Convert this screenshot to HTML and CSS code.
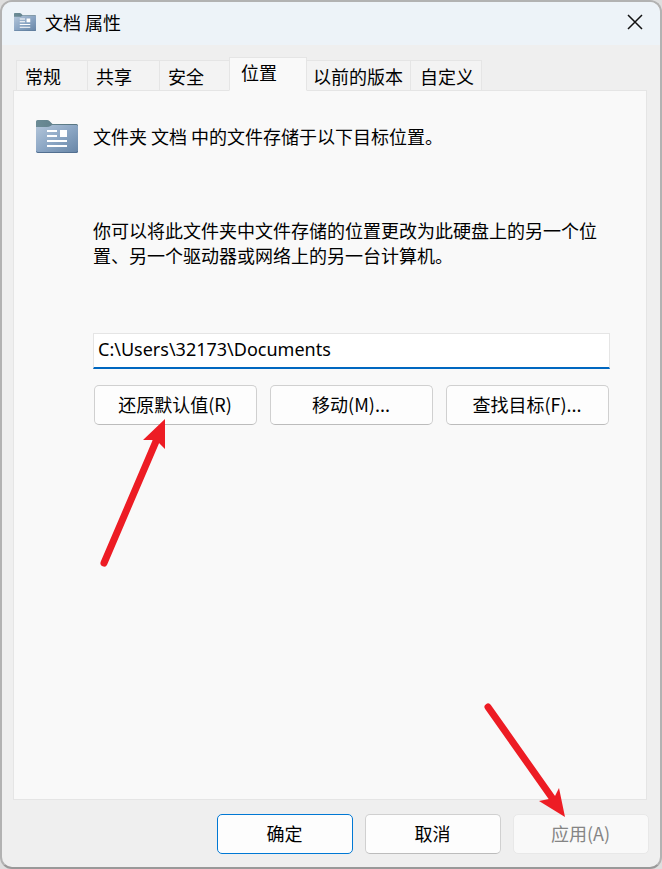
FILE: index.html
```html
<!DOCTYPE html>
<html lang="zh-CN">
<head>
<meta charset="utf-8">
<meta name="viewport" content="width=device-width, initial-scale=1">
<title>文档 属性</title>
<link rel="stylesheet" href="styles.css">
</head>
<body>
<svg width="0" height="0" class="defs" aria-hidden="true">
  <defs>
    <linearGradient id="front" x1="0" y1="0" x2="1" y2="1">
      <stop offset="0" stop-color="#b4c6da"/>
      <stop offset="0.5" stop-color="#8ba6c4"/>
      <stop offset="1" stop-color="#6785a6"/>
    </linearGradient>
    <linearGradient id="back" x1="0" y1="0" x2="1" y2="0">
      <stop offset="0" stop-color="#6c8c96"/>
      <stop offset="1" stop-color="#55737f"/>
    </linearGradient>
    <symbol id="folder" viewBox="0 0 42 33">
      <path d="M0 1.500Q0 0 1.500 0H11Q12.500 0 13.500 1L16.500 4H40.500Q42 4 42 5.500V10H0Z" fill="url(#back)"/>
      <path d="M0 7H11Q13 7 14.500 6L16 5H40.500Q42 5 42 6.500V31.500Q42 33 40.500 33H1.500Q0 33 0 31.500Z" fill="url(#front)"/>
      <path d="M0.500 31.500Q1 32.500 2 32.500H40Q41.500 32.500 41.500 31" fill="none" stroke="#526f90"/>
      <path d="M11 10h10v2H11zM11 15h10v2H11zM11 20h20v2H11zM11 25h20v2H11zM24 10h7v7h-7z" fill="#fff"/>
    </symbol>
  </defs>
</svg>
<div class="window">
  <header class="titlebar">
    <svg class="title-icon" viewBox="0 0 42 33" preserveAspectRatio="none" aria-hidden="true"><use href="#folder"/></svg>
    <h1>文档 属性</h1>
    <button class="close" type="button" aria-label="关闭">
      <svg width="16" height="16" viewBox="0 0 16 16" aria-hidden="true"><path d="M1 1L15 15M15 1L1 15" stroke="#111" stroke-width="1.500"/></svg>
    </button>
  </header>
  <nav class="tabs" role="tablist">
    <button class="tab short" type="button" role="tab">常规</button>
    <button class="tab short" type="button" role="tab">共享</button>
    <button class="tab short" type="button" role="tab">安全</button>
    <button class="tab selected" type="button" role="tab" aria-selected="true">位置</button>
    <button class="tab" type="button" role="tab">以前的版本</button>
    <button class="tab" type="button" role="tab">自定义</button>
  </nav>
  <main class="panel">
    <div class="summary">
      <svg class="folder-icon" viewBox="0 0 42 33" aria-hidden="true"><use href="#folder"/></svg>
      <p>文件夹 文档 中的文件存储于以下目标位置。</p>
    </div>
    <div class="content">
      <p>你可以将此文件夹中文件存储的位置更改为此硬盘上的另一个位置、另一个驱动器或网络上的另一台计算机。</p>
      <input class="path" type="text" aria-label="目标位置" value="C:\Users\32173\Documents">
      <div class="actions">
        <div class="marked">
          <button class="button" type="button">还原默认值(R)</button>
          <svg class="arrow arrow-restore" width="72" height="154" viewBox="0 0 72 154" aria-hidden="true">
            <path d="M6 146L59 22" stroke="#ed1c24" stroke-width="7" stroke-linecap="round"/>
            <path d="M67 2L45 23L54 23L61 26L67 32Z" fill="#ed1c24"/>
          </svg>
        </div>
        <button class="button" type="button">移动(M)...</button>
        <button class="button" type="button">查找目标(F)...</button>
      </div>
    </div>
  </main>
  <footer class="footer">
    <button class="button default" type="button">确定</button>
    <button class="button" type="button">取消</button>
    <div class="marked">
      <button class="button" type="button" disabled>应用(A)</button>
      <svg class="arrow arrow-apply" width="88" height="120" viewBox="0 0 88 120" aria-hidden="true">
        <path d="M6 6L73 101" stroke="#ed1c24" stroke-width="7" stroke-linecap="round"/>
        <path d="M83 116L57 100L67 98L73 95L77 87Z" fill="#ed1c24"/>
      </svg>
    </div>
  </footer>
</div>
</body>
</html>
```
FILE: styles.css
```css
* {
  box-sizing: border-box;
}

body {
  margin: 0;
  background: #dedede;
  color: #000;
  font: 18px/25px "Noto Sans CJK SC", sans-serif;
}

h1,
p {
  margin: 0;
  font-size: 18px;
  font-weight: 400;
}

button,
input {
  color: inherit;
  font: inherit;
}

.defs {
  position: absolute;
}

.window {
  display: flex;
  flex-direction: column;
  min-height: 100vh;
  border: 2px solid #b2b2b2;
  border-bottom-color: #999;
  border-radius: 12px;
  background: #efefef;
}

.titlebar {
  display: flex;
  align-items: center;
  height: 43px;
  padding: 0 9px 3px 12px;
  border-radius: 10px 10px 0 0;
  background: #edf3f8;
}

.title-icon {
  width: 22px;
  height: 18px;
  margin-right: 9px;
}

.close {
  display: flex;
  align-items: center;
  justify-content: center;
  width: 32px;
  height: 32px;
  margin-left: auto;
  padding: 0;
  border: 0;
  background: none;
}

.tabs {
  display: flex;
  align-items: flex-end;
  height: 34px;
  margin: 12px 12px 0 14px;
  isolation: isolate;
  z-index: 1;
}

.tab {
  height: 31px;
  padding: 3px 7px 1px 6px;
  border: 1px solid #e5e5e5;
  border-left-width: 0;
  background: #f3f3f3;
  text-align: left;
}

.tab.short {
  width: 72px;
  padding-left: 8px;
}

.tab:first-child {
  border-left-width: 1px;
}

.tab:last-child {
  padding-left: 9px;
}

.tab.selected {
  width: 78px;
  height: 34px;
  margin-left: -3px;
  padding: 1px 7px 5px 11px;
  border-left-width: 1px;
  border-bottom-color: #f9f9f9;
  background: #f9f9f9;
  z-index: 1;
}

.panel {
  flex: 1;
  margin: -1px 13px 0 11px;
  padding: 29px 36px 29px 22px;
  border: 1px solid #e5e5e5;
  background: #f9f9f9;
}

.summary {
  display: flex;
  align-items: center;
  gap: 15px;
}

.folder-icon {
  width: 42px;
  height: 33px;
}

.content {
  padding: 65px 0 0 57px;
}

.path {
  display: block;
  width: 100%;
  height: 36px;
  margin-top: 65px;
  padding: 0 4px 4px;
  border: 1px solid #e5e5e5;
  border-bottom: 2px solid #0067c0;
  border-radius: 0;
  background: #fff;
  font-family: "Noto Sans", sans-serif;
  outline: 0;
}

.actions {
  display: grid;
  grid-template-columns: repeat(3, 1fr);
  gap: 13px;
  margin: 16px 1px 0;
}

.marked {
  position: relative;
}

.button {
  width: 100%;
  height: 40px;
  padding: 0 1px 2px 0;
  border: 1px solid #d0d0d0;
  border-bottom-color: #bcbcbc;
  border-radius: 5px;
  background: #fdfdfd;
}

.button.default {
  border-color: #0078d4;
}

.button:disabled {
  border-color: #e8e8e8;
  background: #f9f9f9;
  color: #858585;
}

.footer {
  display: grid;
  grid-template-columns: repeat(3, 136px);
  justify-content: end;
  gap: 12px;
  padding: 14px 11px 13px;
}

.arrow {
  position: absolute;
  fill: none;
  pointer-events: none;
}

.arrow-restore {
  top: 32px;
  left: 4px;
}

.arrow-apply {
  right: 79px;
  bottom: 33px;
}
```
